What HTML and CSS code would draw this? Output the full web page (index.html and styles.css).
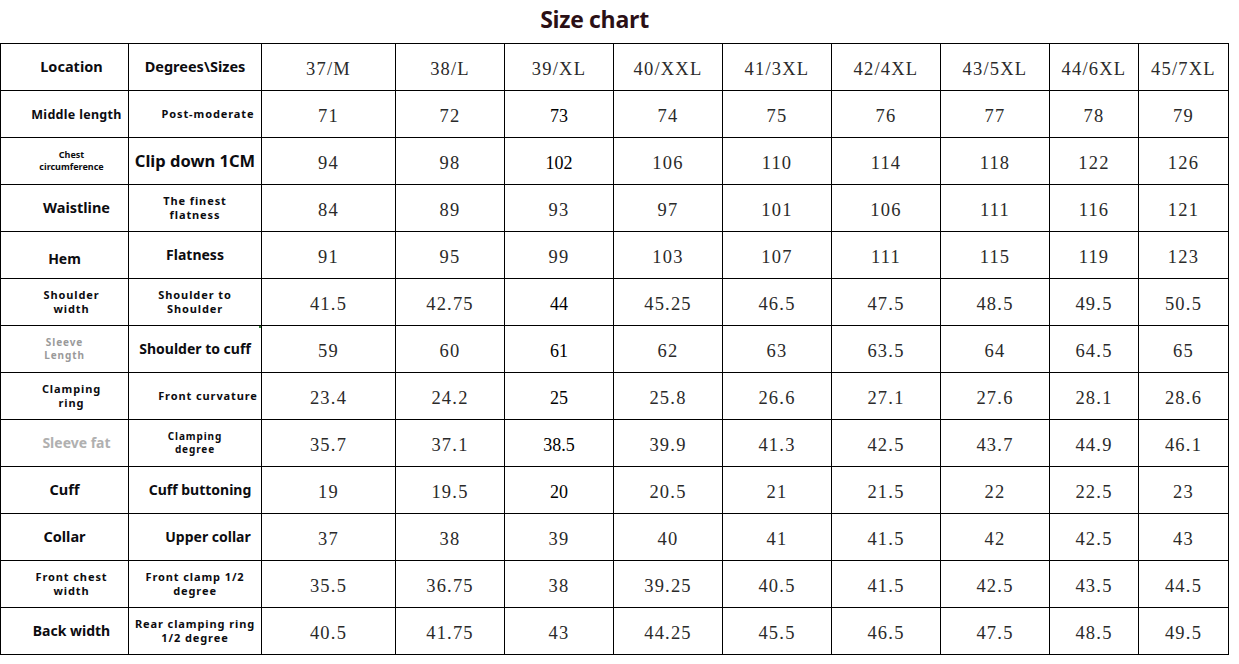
FILE: index.html
```html
<!DOCTYPE html>
<html>
<head>
<meta charset="utf-8">
<link rel="stylesheet" href="styles.css">
</head>
<body>
<div class="page">
  <h1 class="title">Size chart</h1>
  <table class="chart">
    <colgroup>
      <col class="c1"><col class="c2"><col class="c3"><col class="c4"><col class="c4"><col class="c4"><col class="c4"><col class="c4"><col class="c4"><col class="c5"><col class="c6">
    </colgroup>
    <tr>
      <td class="loc big">Location</td>
      <td class="deg big">Degrees\Sizes</td>
      <td class="n">37/M</td><td class="n">38/L</td><td class="n">39/XL</td><td class="n">40/XXL</td><td class="n">41/3XL</td><td class="n">42/4XL</td><td class="n">43/5XL</td><td class="n">44/6XL</td><td class="n">45/7XL</td>
    </tr>
    <tr>
      <td class="loc med2 r2">Middle length</td>
      <td class="deg sm sp pr">Post-moderate</td>
      <td class="n">71</td><td class="n">72</td><td class="n alt">73</td><td class="n">74</td><td class="n">75</td><td class="n">76</td><td class="n">77</td><td class="n">78</td><td class="n">79</td>
    </tr>
    <tr>
      <td class="loc xs">Chest<br>circumference</td>
      <td class="deg xl">Clip down 1CM</td>
      <td class="n">94</td><td class="n">98</td><td class="n alt">102</td><td class="n">106</td><td class="n">110</td><td class="n">114</td><td class="n">118</td><td class="n">122</td><td class="n">126</td>
    </tr>
    <tr>
      <td class="loc big r2">Waistline</td>
      <td class="deg sm sp">The finest<br>flatness</td>
      <td class="n">84</td><td class="n">89</td><td class="n">93</td><td class="n">97</td><td class="n">101</td><td class="n">106</td><td class="n">111</td><td class="n">116</td><td class="n">121</td>
    </tr>
    <tr>
      <td class="loc med l0"><span class="low">Hem</span></td>
      <td class="deg med">Flatness</td>
      <td class="n">91</td><td class="n">95</td><td class="n">99</td><td class="n">103</td><td class="n">107</td><td class="n">111</td><td class="n">115</td><td class="n">119</td><td class="n">123</td>
    </tr>
    <tr>
      <td class="loc sm sp">Shoulder<br>width</td>
      <td class="deg sm sp">Shoulder to<br>Shoulder</td>
      <td class="n">41.5</td><td class="n">42.75</td><td class="n alt">44</td><td class="n">45.25</td><td class="n">46.5</td><td class="n">47.5</td><td class="n">48.5</td><td class="n">49.5</td><td class="n">50.5</td>
    </tr>
    <tr>
      <td class="loc xs2 sp grey l0">Sleeve<br>Length</td>
      <td class="deg med">Shoulder to cuff<span class="tick"></span></td>
      <td class="n">59</td><td class="n">60</td><td class="n alt">61</td><td class="n">62</td><td class="n">63</td><td class="n">63.5</td><td class="n">64</td><td class="n">64.5</td><td class="n">65</td>
    </tr>
    <tr>
      <td class="loc sm sp">Clamping<br>ring</td>
      <td class="deg sm sp pr">Front curvature</td>
      <td class="n">23.4</td><td class="n">24.2</td><td class="n alt">25</td><td class="n">25.8</td><td class="n">26.6</td><td class="n">27.1</td><td class="n">27.6</td><td class="n">28.1</td><td class="n">28.6</td>
    </tr>
    <tr>
      <td class="loc med grey2 r2">Sleeve fat</td>
      <td class="deg xs2 sp">Clamping<br>degree</td>
      <td class="n">35.7</td><td class="n">37.1</td><td class="n alt">38.5</td><td class="n">39.9</td><td class="n">41.3</td><td class="n">42.5</td><td class="n">43.7</td><td class="n">44.9</td><td class="n">46.1</td>
    </tr>
    <tr>
      <td class="loc big l0">Cuff</td>
      <td class="deg med pr0">Cuff buttoning</td>
      <td class="n">19</td><td class="n">19.5</td><td class="n alt">20</td><td class="n">20.5</td><td class="n">21</td><td class="n">21.5</td><td class="n">22</td><td class="n">22.5</td><td class="n">23</td>
    </tr>
    <tr>
      <td class="loc big l0">Collar</td>
      <td class="deg med pr">Upper collar</td>
      <td class="n">37</td><td class="n">38</td><td class="n">39</td><td class="n">40</td><td class="n">41</td><td class="n">41.5</td><td class="n">42</td><td class="n">42.5</td><td class="n">43</td>
    </tr>
    <tr>
      <td class="loc sm sp">Front chest<br>width</td>
      <td class="deg sm sp">Front clamp 1/2<br>degree</td>
      <td class="n">35.5</td><td class="n">36.75</td><td class="n">38</td><td class="n">39.25</td><td class="n">40.5</td><td class="n">41.5</td><td class="n">42.5</td><td class="n">43.5</td><td class="n">44.5</td>
    </tr>
    <tr>
      <td class="loc med">Back width</td>
      <td class="deg sm sp">Rear clamping ring<br>1/2 degree</td>
      <td class="n">40.5</td><td class="n">41.75</td><td class="n">43</td><td class="n">44.25</td><td class="n">45.5</td><td class="n">46.5</td><td class="n">47.5</td><td class="n">48.5</td><td class="n">49.5</td>
    </tr>
  </table>
</div>
</body>
</html>
```
FILE: styles.css
```css
html, body {
  margin: 0;
  padding: 0;
  background: #fff;
}
.page {
  width: 1239px;
  height: 664px;
  overflow: hidden;
}
.title {
  margin: 0;
  height: 43px;
  line-height: 38px;
  padding-right: 50px;
  text-align: center;
  font-family: "Open Sans", "Noto Sans", sans-serif;
  font-weight: 700;
  font-size: 23px;
  color: #2b1016;
  letter-spacing: -0.3px;
}
.chart {
  border-collapse: collapse;
  table-layout: fixed;
  width: 1228px;
  margin-left: 0;
}
.c1 { width: 128px; }
.c2 { width: 133px; }
.c3 { width: 134px; }
.c4 { width: 109px; }
.c5 { width: 89px; }
.c6 { width: 90px; }
.chart tr { height: 47px; }
.chart td {
  border: 1px solid #000;
  padding: 0;
  text-align: center;
  vertical-align: middle;
  overflow: hidden;
  white-space: nowrap;
}
.loc, .deg {
  font-family: "Noto Sans", "Open Sans", "Liberation Sans", sans-serif;
  font-weight: 700;
  color: #0c0c10;
  line-height: 1.2;
}
.loc { padding-left: 14px !important; }
.loc.l0 { padding-left: 0 !important; }
.loc.r2 { padding-left: 24px !important; }
.deg { position: relative; }
.deg.pr { padding-left: 26px !important; }
.deg.pr0 { padding-left: 10px !important; }
.big { font-size: 14.5px; }
.med { font-size: 14px; }
.med2 { font-size: 12.5px; letter-spacing: 0.3px; }
.xl { font-size: 16.5px; }
.sm { font-size: 11px; line-height: 14px; }
.xs { font-size: 9px; line-height: 12px; }
.xs2 { font-size: 10px; line-height: 13px; }
.sp { letter-spacing: 0.9px; }
.low { position: relative; top: 4px; }
.grey { color: #9a9a9a; }
.grey2 { color: #b0b0b0; }
.n {
  font-family: "Liberation Serif", "DejaVu Serif", serif;
  font-size: 18.5px;
  line-height: 20px;
  color: #2a2a2a;
  letter-spacing: 1.2px;
  padding-top: 3px !important;
}
.n.alt {
  color: #000;
  letter-spacing: 0;
  font-size: 18px;
}
.tick {
  position: absolute;
  right: -2px;
  top: -2px;
  width: 0;
  height: 0;
  border-left: 4px solid #2e7d32;
  border-top: 4px solid transparent;
}
```
